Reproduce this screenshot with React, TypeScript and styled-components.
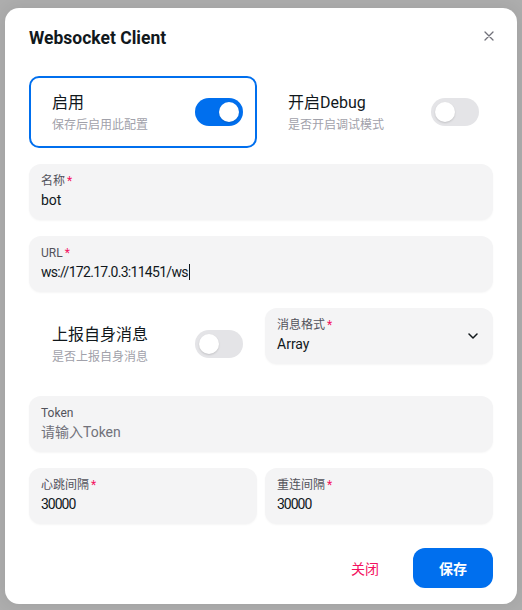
import React from "react";
import styled, { createGlobalStyle } from "styled-components";

const Global = createGlobalStyle`
  html, body { margin: 0; padding: 0; }
  body {
    background: #adadad;
    font-family: Roboto, "Noto Sans CJK SC", sans-serif;
    color: #11181c;
    -webkit-font-smoothing: antialiased;
  }
`;

const Page = styled.div`
  width: 522px;
  height: 610px;
  display: flex;
  justify-content: center;
  align-items: flex-start;
  padding-top: 8px;
  box-sizing: border-box;
`;

const Modal = styled.section`
  position: relative;
  width: 512px;
  background: #fff;
  border-radius: 14px;
  box-shadow: 0 0 15px rgba(0,0,0,0.08);
  display: flex;
  flex-direction: column;
`;

const Header = styled.header`
  padding: 16px 24px;
  font-size: 17.5px;
  line-height: 28px;
  font-weight: 700;
  color: #11181c;
`;

const CloseBtn = styled.button`
  position: absolute;
  top: 12px;
  right: 12px;
  width: 32px;
  height: 32px;
  border: none;
  background: transparent;
  padding: 0;
  display: flex;
  align-items: center;
  justify-content: center;
  color: #71717a;
  cursor: pointer;
`;

const Body = styled.div`
  padding: 8px 24px;
  display: flex;
  flex-direction: column;
  gap: 16px;
`;

const Row = styled.div`
  display: grid;
  grid-template-columns: 1fr 1fr;
  gap: 8px;
  align-items: start;
`;

const SwitchCard = styled.label<{ $active?: boolean }>`
  box-sizing: border-box;
  height: 72px;
  display: flex;
  align-items: center;
  justify-content: space-between;
  padding: 0 12px 0 21px;
  border: 2px solid ${(p) => (p.$active ? "#006fee" : "transparent")};
  border-radius: 10px;
`;

const SwitchText = styled.div`
  display: flex;
  flex-direction: column;
  gap: 3px;
`;

const SwitchTitle = styled.span`
  font-size: 16px;
  line-height: 22px;
  color: #11181c;
`;

const SwitchDesc = styled.span`
  font-size: 12px;
  line-height: 16px;
  color: #a1a1aa;
`;

const Track = styled.span<{ $on?: boolean }>`
  width: 48px;
  height: 28px;
  border-radius: 14px;
  background: ${(p) => (p.$on ? "#006fee" : "#e4e4e7")};
  display: flex;
  align-items: center;
  justify-content: ${(p) => (p.$on ? "flex-end" : "flex-start")};
  padding: 0 4px;
  box-sizing: border-box;
`;

const Thumb = styled.span`
  width: 20px;
  height: 20px;
  border-radius: 50%;
  background: #fff;
  box-shadow: 0 1px 2px rgba(0,0,0,0.15);
`;

const Field = styled.div`
  box-sizing: border-box;
  height: 56px;
  background: #f4f4f5;
  border-radius: 12px;
  padding: 8px 12px 8px 12px;
  display: flex;
  flex-direction: column;
  justify-content: center;
  position: relative;
  box-shadow: 0 1px 2px rgba(0,0,0,0.04);
`;

const Label = styled.span<{ $required?: boolean }>`
  font-size: 12px;
  line-height: 16px;
  color: #52525b;
  &::after {
    content: ${(p) => (p.$required ? "'*'" : "''")};
    color: #f31260;
    margin-left: 2px;
  }
`;

const Value = styled.span<{ $placeholder?: boolean; $spacing?: string }>`
  font-size: 14px;
  line-height: 22px;
  color: ${(p) => (p.$placeholder ? "#71717a" : "#11181c")};
  letter-spacing: ${(p) => p.$spacing ?? "normal"};
  display: flex;
  align-items: center;
`;

const Caret = styled.span`
  display: inline-block;
  width: 1px;
  height: 16px;
  background: #11181c;
  margin-left: 1px;
`;

const Chevron = styled.span`
  position: absolute;
  right: 15px;
  top: 50%;
  transform: translateY(-50%);
  display: flex;
  color: #11181c;
`;

const Footer = styled.footer`
  padding: 16px 24px;
  display: flex;
  justify-content: flex-end;
  gap: 8px;
`;

const Button = styled.button<{ $primary?: boolean }>`
  width: 80px;
  height: 40px;
  border: none;
  border-radius: 12px;
  font-family: inherit;
  font-size: 14px;
  font-weight: ${(p) => (p.$primary ? 600 : 400)};
  background: ${(p) => (p.$primary ? "#006fee" : "transparent")};
  color: ${(p) => (p.$primary ? "#fff" : "#f31260")};
  cursor: pointer;
`;

const Switch = ({ on }: { on?: boolean }) => (
  <Track $on={on}>
    <Thumb />
  </Track>
);

export default function App() {
  return (
    <>
      <Global />
      <Page>
        <Modal>
          <CloseBtn aria-label="close">
            <svg width="10" height="10" viewBox="0 0 10 10">
              <path d="M1 1L9 9M9 1L1 9" stroke="currentColor" strokeWidth="1.3" strokeLinecap="round" />
            </svg>
          </CloseBtn>
          <Header>Websocket Client</Header>
          <Body>
            <Row>
              <SwitchCard $active>
                <SwitchText>
                  <SwitchTitle>启用</SwitchTitle>
                  <SwitchDesc>保存后启用此配置</SwitchDesc>
                </SwitchText>
                <Switch on />
              </SwitchCard>
              <SwitchCard>
                <SwitchText>
                  <SwitchTitle>开启Debug</SwitchTitle>
                  <SwitchDesc>是否开启调试模式</SwitchDesc>
                </SwitchText>
                <Switch />
              </SwitchCard>
            </Row>
            <Field>
              <Label $required>名称</Label>
              <Value>bot</Value>
            </Field>
            <Field>
              <Label $required>URL</Label>
              <Value $spacing="-0.7px">
                ws://172.17.0.3:11451/ws
                <Caret />
              </Value>
            </Field>
            <Row>
              <SwitchCard>
                <SwitchText>
                  <SwitchTitle>上报自身消息</SwitchTitle>
                  <SwitchDesc>是否上报自身消息</SwitchDesc>
                </SwitchText>
                <Switch />
              </SwitchCard>
              <Field>
                <Label $required>消息格式</Label>
                <Value>Array</Value>
                <Chevron>
                  <svg width="10" height="6" viewBox="0 0 10 6">
                    <path d="M1 1L5 5L9 1" fill="none" stroke="currentColor" strokeWidth="1.5" strokeLinecap="round" strokeLinejoin="round" />
                  </svg>
                </Chevron>
              </Field>
            </Row>
            <Field>
              <Label>Token</Label>
              <Value $placeholder>请输入Token</Value>
            </Field>
            <Row>
              <Field>
                <Label $required>心跳间隔</Label>
                <Value $spacing="-1px">30000</Value>
              </Field>
              <Field>
                <Label $required>重连间隔</Label>
                <Value $spacing="-1px">30000</Value>
              </Field>
            </Row>
          </Body>
          <Footer>
            <Button>关闭</Button>
            <Button $primary>保存</Button>
          </Footer>
        </Modal>
      </Page>
    </>
  );
}
